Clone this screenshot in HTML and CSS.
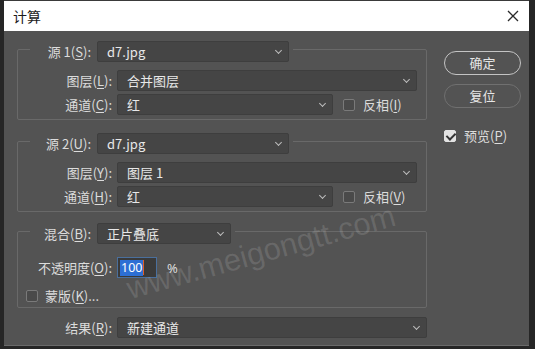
FILE: index.html
```html
<!DOCTYPE html>
<html lang="zh-CN">
<head>
    <meta charset="UTF-8">
    <meta name="viewport" content="width=device-width, initial-scale=1.0">
    <title>计算</title>
    <link rel="stylesheet" href="styles.css">
</head>
<body>
    <div class="dialog">
        <div class="title-bar">
            <span class="title">计算</span>
            <svg class="close" width="12" height="12" viewBox="0 0 12 12">
                <path d="M1 1 L11 11 M11 1 L1 11" stroke="#2a2a2a" stroke-width="1.3" fill="none"/>
            </svg>
        </div>

        <div class="dialog-body">
            <div class="left-col">
                <!-- source 1 -->
                <div class="group group-1">
                    <div class="legend">
                        <span class="legend-label">源 1(<u>S</u>):</span>
                        <div class="select select-src">d7.jpg<i class="chev"></i></div>
                    </div>
                    <div class="row">
                        <span class="label">图层(<u>L</u>):</span>
                        <div class="select select-wide">合并图层<i class="chev"></i></div>
                    </div>
                    <div class="row">
                        <span class="label">通道(<u>C</u>):</span>
                        <div class="select select-mid">红<i class="chev"></i></div>
                        <label class="check"><span class="box"></span><span>反相(<u>I</u>)</span></label>
                    </div>
                </div>

                <!-- source 2 -->
                <div class="group group-2">
                    <div class="legend">
                        <span class="legend-label">源 2(<u>U</u>):</span>
                        <div class="select select-src">d7.jpg<i class="chev"></i></div>
                    </div>
                    <div class="row">
                        <span class="label">图层(<u>Y</u>):</span>
                        <div class="select select-wide">图层 1<i class="chev"></i></div>
                    </div>
                    <div class="row">
                        <span class="label">通道(<u>H</u>):</span>
                        <div class="select select-mid">红<i class="chev"></i></div>
                        <label class="check"><span class="box"></span><span>反相(<u>V</u>)</span></label>
                    </div>
                </div>

                <!-- blending -->
                <div class="group group-3">
                    <div class="legend">
                        <span class="legend-label">混合(<u>B</u>):</span>
                        <div class="select select-blend">正片叠底<i class="chev"></i></div>
                    </div>
                    <div class="row opacity-row">
                        <span class="label">不透明度(<u>O</u>):</span>
                        <div class="num-input"><span class="sel">100</span><span class="caret"></span></div>
                        <span class="pct">%</span>
                    </div>
                    <label class="check mask"><span class="box"></span><span>蒙版(<u>K</u>)...</span></label>
                </div>

                <div class="row result-row">
                    <span class="label">结果(<u>R</u>):</span>
                    <div class="select select-result">新建通道<i class="chev"></i></div>
                </div>
            </div>

            <div class="right-col">
                <div class="btn btn-default">确定</div>
                <div class="btn">复位</div>
                <label class="check preview"><span class="box checked"></span><span>预览(<u>P</u>)</span></label>
            </div>
        </div>

        <div class="watermark">www.meigongtt.com</div>
    </div>
</body>
</html>
```

FILE: styles.css
```css
* {
    box-sizing: border-box;
}

body {
    margin: 0;
    background: #262626;
    font-family: "Noto Sans CJK SC", "Noto Sans", sans-serif;
    font-size: 13px;
    color: #dcdcdc;
    width: 535px;
    height: 349px;
    overflow: hidden;
}

u {
    text-decoration: underline;
    text-underline-offset: 2px;
}

.dialog {
    position: relative;
    margin-left: 4px;
    width: 525px;
    height: 346px;
    background: #535353;
    border-bottom: 1px solid #6a6a6a;
    overflow: hidden;
}

.title-bar {
    height: 31px;
    background: #ffffff;
    display: flex;
    align-items: center;
    justify-content: space-between;
    padding: 0 10px 0 9px;
    border-top: 1px solid #3a3a3a;
}

.title {
    color: #1a1a1a;
    font-size: 14px;
}

.dialog-body {
    display: flex;
    gap: 17px;
    padding: 18px 0 0 13px;
}

.left-col {
    width: 410px;
    display: flex;
    flex-direction: column;
}

/* groups */
.group {
    border: 1px solid #696969;
    border-radius: 2px;
    display: flex;
    flex-direction: column;
    gap: 3px;
}

.group-1 {
    height: 71px;
}

.group-2 {
    margin-top: 21px;
    height: 71px;
}

.group-3 {
    margin-top: 19px;
    height: 77px;
}

.legend {
    display: flex;
    align-items: center;
    align-self: flex-start;
    margin: -9px 0 5px 12px;
    padding-right: 4px;
    background: #535353;
}

.legend-label {
    width: 67px;
    text-align: right;
    padding-right: 6px;
    white-space: nowrap;
}

.row {
    display: flex;
    align-items: center;
    height: 21px;
}

.label {
    width: 99px;
    flex-shrink: 0;
    text-align: right;
    padding-right: 5px;
    white-space: nowrap;
}

/* dropdowns */
.select {
    position: relative;
    height: 21px;
    line-height: 19px;
    background: #454545;
    border: 1px solid #3e3e3e;
    border-radius: 2px;
    padding-left: 9px;
    color: #e8e8e8;
    flex-shrink: 0;
}

.chev {
    position: absolute;
    right: 7px;
    top: 6px;
    width: 5px;
    height: 5px;
    border-right: 1.3px solid #bdbdbd;
    border-bottom: 1.3px solid #bdbdbd;
    transform: rotate(45deg);
}

.select-src {
    width: 192px;
}

.select-wide {
    width: 300px;
}

.select-mid {
    width: 216px;
}

.select-blend {
    width: 134px;
}

.select-result {
    width: 310px;
}

/* checkboxes */
.check {
    display: flex;
    align-items: center;
    gap: 8px;
    white-space: nowrap;
}

.row .check {
    margin-left: 10px;
}

.box {
    width: 12px;
    height: 12px;
    border: 1px solid #7a7a7a;
    border-radius: 2px;
    background: #4a4a4a;
}

.box.checked {
    position: relative;
    background: #e2e2e2;
    border-color: #e2e2e2;
}

.box.checked::after {
    content: "";
    position: absolute;
    left: 3px;
    top: 0;
    width: 4px;
    height: 7px;
    border-right: 2px solid #333;
    border-bottom: 2px solid #333;
    transform: rotate(45deg);
}

/* opacity */
.opacity-row {
    margin-top: 5px;
}

.num-input {
    width: 40px;
    height: 21px;
    background: #3a3a3a;
    border: 1px solid #4a6f9c;
    display: flex;
    align-items: center;
    padding-left: 2px;
}

.sel {
    background: #2d6fd4;
    color: #ffffff;
    line-height: 16px;
    font-family: "Noto Sans", sans-serif;
    font-size: 12.5px;
    padding: 0 1px;
}

.caret {
    width: 1px;
    height: 15px;
    background: #e0602a;
}

.pct {
    margin-left: 10px;
    font-family: "Noto Sans", sans-serif;
}

.mask {
    margin: 5px 0 0 8px;
    gap: 7px;
}

.result-row {
    margin-top: 9px;
}

.result-row .label {
    width: 100px;
}

/* right column */
.right-col {
    width: 77px;
    padding-top: 2px;
    display: flex;
    flex-direction: column;
}

.btn {
    height: 24px;
    border: 1.5px solid #707070;
    border-radius: 12px;
    text-align: center;
    line-height: 21px;
    color: #e6e6e6;
    margin-bottom: 9px;
}

.btn-default {
    border-color: #c4c4c4;
}

.preview {
    margin-top: 9px;
    gap: 8px;
}

.watermark {
    position: absolute;
    left: 128px;
    top: 272px;
    font-family: "Liberation Sans", Arial, sans-serif;
    font-size: 31px;
    line-height: 34px;
    color: rgba(255, 255, 255, 0.13);
    transform: rotate(-15.5deg);
    transform-origin: left bottom;
    white-space: nowrap;
    pointer-events: none;
}
```
